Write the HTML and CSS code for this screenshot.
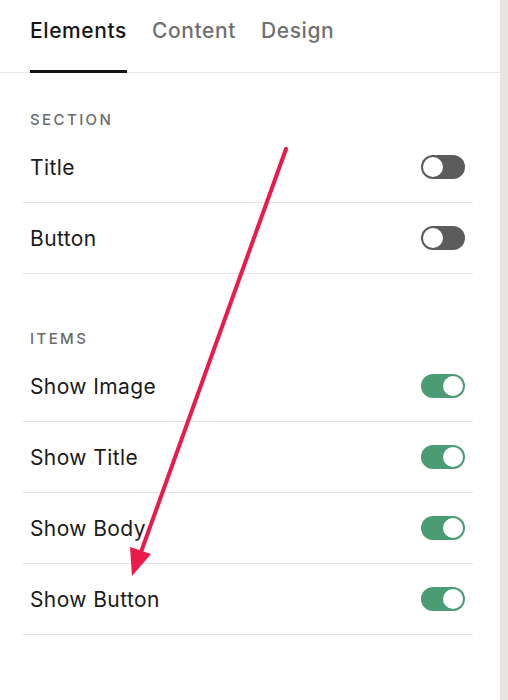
FILE: index.html
```html
<!DOCTYPE html>
<html lang="en">
<head>
    <meta charset="UTF-8">
    <meta name="viewport" content="width=device-width, initial-scale=1.0">
    <title>Section Elements</title>
    <link rel="stylesheet" href="styles.css">
</head>
<body>
    <div class="panel">
        <nav class="tabs">
            <a href="#" class="tab active">Elements</a>
            <a href="#" class="tab">Content</a>
            <a href="#" class="tab">Design</a>
        </nav>

        <div class="group">
            <h3 class="group-label">Section</h3>
            <div class="row">
                <span>Title</span>
                <span class="toggle"></span>
            </div>
            <div class="row">
                <span>Button</span>
                <span class="toggle"></span>
            </div>
        </div>

        <div class="group">
            <h3 class="group-label">Items</h3>
            <div class="row">
                <span>Show Image</span>
                <span class="toggle on"></span>
            </div>
            <div class="row">
                <span>Show Title</span>
                <span class="toggle on"></span>
            </div>
            <div class="row">
                <span>Show Body</span>
                <span class="toggle on"></span>
            </div>
            <div class="row">
                <span>Show Button</span>
                <span class="toggle on"></span>
            </div>
        </div>

        <!-- annotation arrow drawn over the panel -->
        <svg class="arrow" width="508" height="700" viewBox="0 0 508 700">
            <line x1="286" y1="149" x2="141" y2="552" stroke="#eb1a4b" stroke-width="4" stroke-linecap="round"/>
            <polygon points="130,547 151,554 132,576" fill="#eb1a4b"/>
        </svg>
    </div>
</body>
</html>
```

FILE: styles.css
```css
* {
    margin: 0;
    padding: 0;
    box-sizing: border-box;
}

body {
    font-family: Inter, "Liberation Sans", sans-serif;
    background-color: #e8e5de;
    color: #1a1a1a;
}

.panel {
    position: relative;
    width: 500px;
    height: 700px;
    background-color: white;
}

.tabs {
    display: flex;
    gap: 25px;
    height: 73px;
    padding-left: 30px;
    border-bottom: 1px solid #e6e6e6;
}

.tab {
    display: flex;
    align-items: center;
    height: 73px;
    padding-bottom: 12px;
    font-size: 21px;
    font-weight: 500;
    letter-spacing: 0.6px;
    color: #707070;
    text-decoration: none;
}

.tab.active {
    color: #161616;
    border-bottom: 3px solid #161616;
    padding-bottom: 9px;
}

.group {
    margin: 0 27px 0 22px;
    padding-top: 37px;
}

.group + .group {
    padding-top: 55px;
}

.group-label {
    height: 20px;
    line-height: 20px;
    padding-left: 8px;
    margin-bottom: 2px;
    font-size: 15px;
    font-weight: 500;
    letter-spacing: 2.4px;
    text-transform: uppercase;
    color: #6b6b6b;
}

.row {
    display: flex;
    align-items: center;
    justify-content: space-between;
    height: 71px;
    padding: 0 8px 0 8px;
    border-bottom: 1px solid #e6e6e6;
    font-size: 21px;
    letter-spacing: 0.4px;
}

.toggle {
    position: relative;
    width: 44px;
    height: 24px;
    border-radius: 12px;
    background-color: #5c5c5c;
}

.toggle::after {
    content: '';
    position: absolute;
    top: 2px;
    left: 2px;
    width: 20px;
    height: 20px;
    border-radius: 50%;
    background-color: white;
}

.toggle.on {
    background-color: #4b9b75;
}

.toggle.on::after {
    left: 22px;
}

.arrow {
    position: absolute;
    top: 0;
    left: 0;
    pointer-events: none;
}
```
